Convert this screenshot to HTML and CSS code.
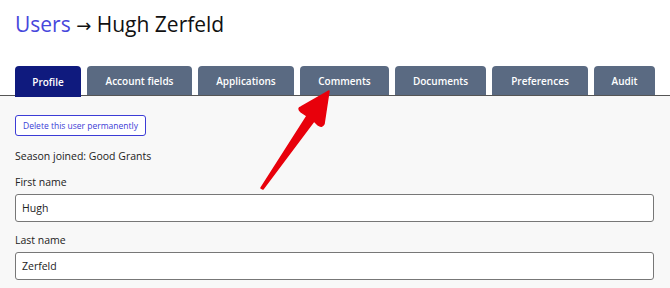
FILE: index.html
```html
<!DOCTYPE html>
<html>
<head>
<meta charset="utf-8">
<link rel="stylesheet" href="styles.css">
</head>
<body>
<div class="page">
  <h1 class="title"><a class="crumb">Users</a> <span class="sep">→</span> Hugh Zerfeld</h1>
  <nav class="tabs">
    <span class="tab active">Profile</span>
    <span class="tab t-account">Account fields</span>
    <span class="tab t-apps">Applications</span>
    <span class="tab t-comments">Comments</span>
    <span class="tab t-docs">Documents</span>
    <span class="tab t-prefs">Preferences</span>
    <span class="tab t-audit">Audit</span>
  </nav>
  <main class="panel">
    <button class="danger">Delete this user permanently</button>
    <p class="season">Season joined: Good Grants</p>
    <label class="field">
      <span class="label">First name</span>
      <span class="input">Hugh</span>
    </label>
    <label class="field">
      <span class="label">Last name</span>
      <span class="input">Zerfeld</span>
    </label>
  </main>
  <svg class="annot" width="670" height="288" viewBox="0 0 670 288">
    <path d="M329 91 L324 124 Q322 128 318 125 L314 121 L263 189 L261 188 L307 116 L301 112 Q297 108 301 107 Z" fill="#e8000b" stroke="#e8000b" stroke-width="1.5" stroke-linejoin="round"/>
  </svg>
</div>
</body>
</html>
```
FILE: styles.css
```css
* { box-sizing: border-box; }
html, body { margin: 0; padding: 0; background: #fff; }
body { font-family: "Open Sans", "Noto Sans", sans-serif; color: #222; }
.page { position: relative; width: 670px; height: 288px; overflow: hidden; }
.title {
  margin: 0;
  padding: 8px 0 0 15px;
  height: 66px;
  font-size: 21px;
  font-weight: 400;
  line-height: 32px;
  color: #111;
}
.crumb { color: #4747dc; }
.sep { font-family: "DejaVu Sans", sans-serif; font-size: 18px; }
.tabs {
  display: flex;
  gap: 6px;
  padding-left: 15px;
  height: 30px;
  border-bottom: 1px solid #555;
  align-items: flex-end;
}
.tab {
  height: 29px;
  display: flex;
  align-items: center;
  justify-content: center;
  background: #5a6a82;
  color: #fff;
  font-size: 10px;
  font-weight: 600;
  border-radius: 4px 4px 0 0;
}
.tab.active { background: #0f1a7e; height: 31px; margin-bottom: -2px; width: 66px; }
.t-account { width: 105px; }
.t-apps { width: 96px; }
.t-comments { width: 89px; }
.t-docs { width: 91px; }
.t-prefs { width: 96px; }
.t-audit { width: 61px; }
.panel {
  background: #f8f8f8;
  padding: 19px 16px 0 15px;
  height: 193px;
}
.danger {
  display: block;
  font-family: inherit;
  font-size: 8.5px;
  color: #3c3cd6;
  background: #fff;
  border: 1px solid #3c3cd6;
  border-radius: 3px;
  height: 21px;
  width: 131px;
  padding: 0;
}
.season { margin: 9px 0 0; font-size: 10.5px; line-height: 22px; }
.field { display: block; margin-top: 7px; }
.label { display: block; font-size: 10.5px; line-height: 16px; margin-bottom: 4px; }
.input {
  display: flex;
  align-items: center;
  height: 28px;
  background: #fff;
  border: 1px solid #777;
  border-radius: 3px;
  padding-left: 6px;
  font-size: 10.5px;
  margin-bottom: 10px;
}
.annot { position: absolute; left: 0; top: 0; pointer-events: none; }
```
